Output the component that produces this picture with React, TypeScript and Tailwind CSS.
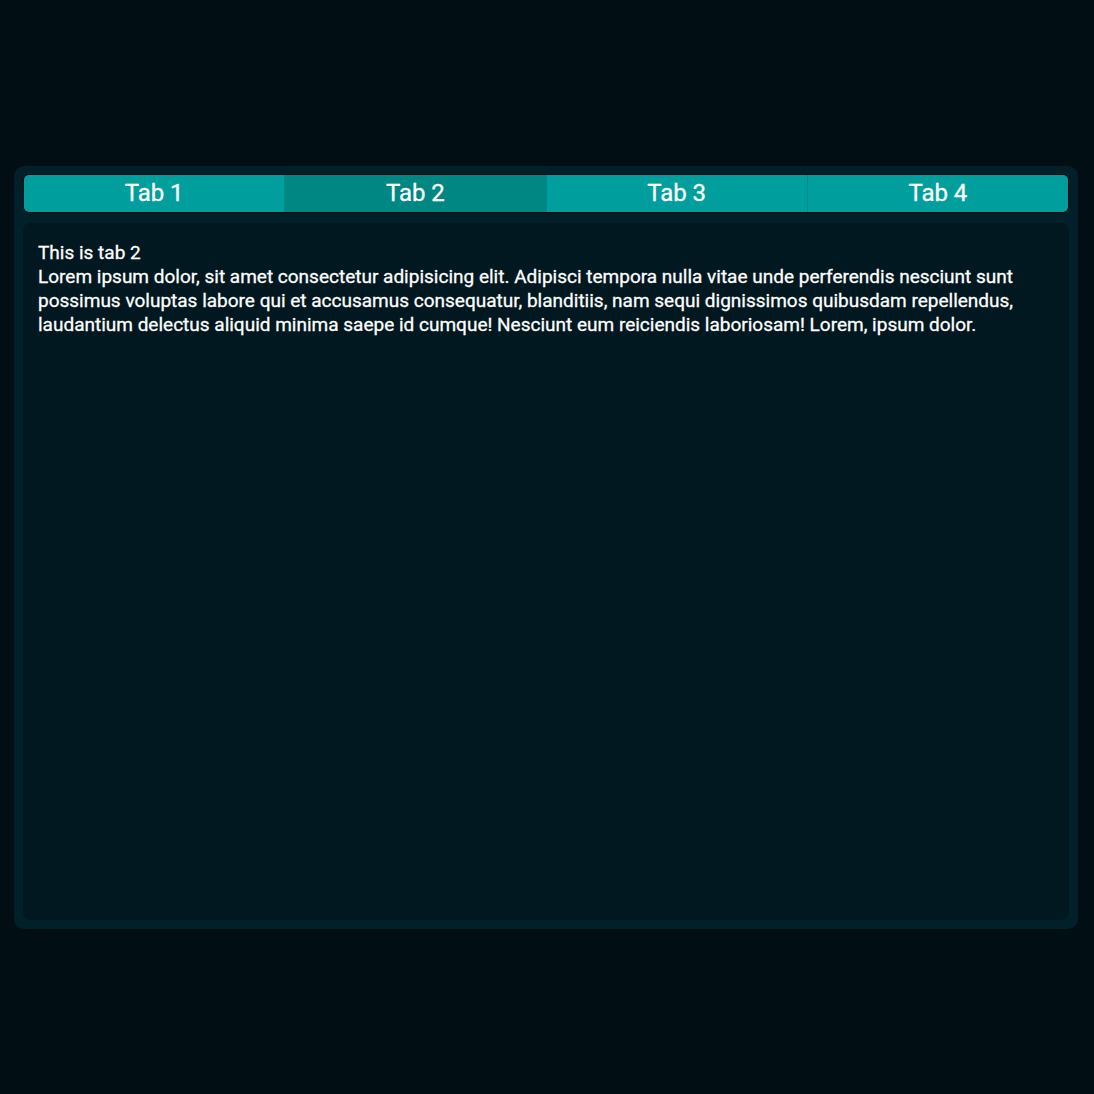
import { useState } from "react";

const tabs = ["Tab 1", "Tab 2", "Tab 3", "Tab 4"];

export default function App() {
  const [active, setActive] = useState(1);

  return (
    <main
      className="min-h-screen flex items-center justify-center bg-[#010e14]"
      style={{ fontFamily: "Roboto, 'Noto Sans', sans-serif" }}
    >
      <div className="w-[1064px] h-[763px] -translate-x-px flex flex-col gap-[10px] rounded-[10px] bg-[#02202a] p-[9px] pt-[8px]">
        {/* Tab bar */}
        <div className="flex h-[39px] rounded-[6px] border border-[#01080c] overflow-hidden">
          {tabs.map((t, i) => (
            <button
              key={t}
              onClick={() => setActive(i)}
              className={`flex-1 flex items-center justify-center text-[24px] text-white [-webkit-text-stroke:0.3px_#fff] ${
                i > 0 ? "border-l border-[#018a87]" : ""
              } ${i === active ? "bg-[#008683]" : "bg-[#009e9c]"}`}
            >
              {t}
            </button>
          ))}
        </div>

        {/* Panel */}
        <div className="flex-1 rounded-[8px] bg-[#011820] pl-[15px] pr-[14px] pt-[18px] text-[19px] leading-[24px] text-white [-webkit-text-stroke:0.3px_#fff]">
          <p>This is tab {active + 1}</p>
          <p>
            Lorem ipsum dolor, sit amet consectetur adipisicing elit. Adipisci tempora nulla vitae unde perferendis
            nesciunt sunt possimus voluptas labore qui et accusamus consequatur, blanditiis, nam sequi dignissimos
            quibusdam repellendus, laudantium delectus aliquid minima saepe id cumque! Nesciunt eum reiciendis
            laboriosam! Lorem, ipsum dolor.
          </p>
        </div>
      </div>
    </main>
  );
}
